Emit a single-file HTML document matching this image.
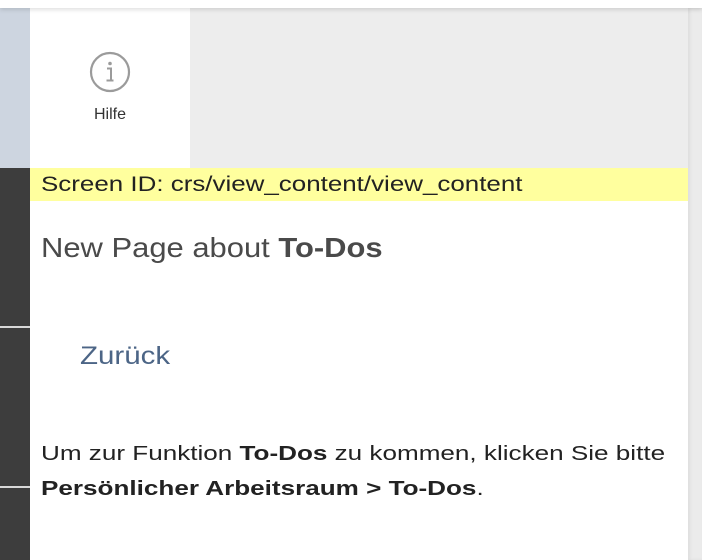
<!DOCTYPE html>
<html><head><meta charset="utf-8"><style>
*{margin:0;padding:0;box-sizing:border-box}
body{width:702px;height:560px;overflow:hidden;background:#fff;font-family:"Liberation Sans",sans-serif;position:relative}
.abs{position:absolute;transform-origin:0 0}
</style></head><body>
<div class="abs" style="left:0;top:0;width:702px;height:8px;background:#fff;box-shadow:0 2px 4px rgba(0,0,0,.12);z-index:3"></div>
<div class="abs" style="left:0;top:8px;width:30px;height:160px;background:#cdd5e0"></div>
<div class="abs" style="left:0;top:168px;width:30px;height:392px;background:#3d3d3d"></div>
<div class="abs" style="left:0;top:326px;width:30px;height:2px;background:#d8d8d8"></div>
<div class="abs" style="left:0;top:486px;width:30px;height:2px;background:#d8d8d8"></div>
<div class="abs" style="left:688px;top:8px;width:14px;height:552px;background:#ebebeb;box-shadow:inset 2px 0 3px rgba(0,0,0,.06)"></div>
<div class="abs" style="left:190px;top:8px;width:498px;height:160px;background:#ededed"></div>
<div class="abs" style="left:30px;top:8px;width:160px;height:160px;background:#fff"></div>
<svg class="abs" style="left:89px;top:51px" width="42" height="42" viewBox="0 0 42 42">
<circle cx="21" cy="21" r="19" fill="none" stroke="#9b9b9b" stroke-width="2.2"/>
<circle cx="21" cy="12.5" r="1.8" fill="#9b9b9b"/>
<path d="M18 17.5h4v12M17.5 29.5h7" fill="none" stroke="#9b9b9b" stroke-width="2"/>
</svg>
<div class="abs" style="left:30px;top:106px;width:160px;text-align:center;font-size:16px;color:#333">Hilfe</div>
<div class="abs" style="left:30px;top:168px;width:658px;height:33px;background:#ffff9e"></div>
<div class="abs" style="left:41px;top:173px;font-size:21px;color:#222;white-space:nowrap;transform:scaleX(1.235)">Screen ID: crs/view_content/view_content</div>
<div class="abs" style="left:41px;top:232px;font-size:28px;color:#4a4a4a;white-space:nowrap;transform:scaleX(1.105)">New Page about <b>To-Dos</b></div>
<div class="abs" style="left:80px;top:342px;font-size:25px;color:#4c6586;white-space:nowrap;transform:scaleX(1.18)">Zurück</div>
<div class="abs" style="left:41px;top:436px;font-size:20.5px;line-height:35px;color:#222;white-space:nowrap;transform:scaleX(1.272)">Um zur Funktion <b>To-Dos</b> zu kommen, klicken Sie bitte<br><b>Persönlicher Arbeitsraum &gt; To-Dos</b>.</div>
</body></html>
